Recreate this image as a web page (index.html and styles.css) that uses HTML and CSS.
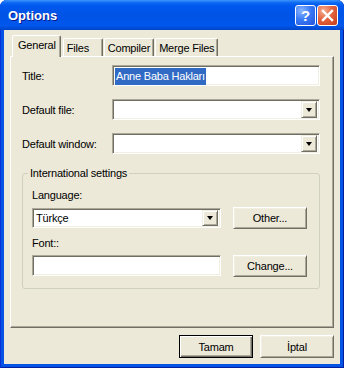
FILE: index.html
```html
<!DOCTYPE html>
<html lang="tr">
<head>
  <meta charset="UTF-8" />
  <title>Options</title>
  <link rel="stylesheet" href="styles.css">
</head>
<body>

<div class="window">

  <!-- Başlık çubuğu -->
  <div class="titlebar">
    <span class="title">Options</span>
    <div class="caption">
      <span class="cap help">?</span>
      <span class="cap close">
        <svg width="13" height="13" viewBox="0 0 13 13">
          <path d="M2 2 L11 11 M11 2 L2 11" stroke="#fff" stroke-width="2.4" stroke-linecap="square" />
        </svg>
      </span>
    </div>
  </div>

  <div class="client">

    <!-- Sekmeler -->
    <div class="tabs">
      <div class="tab active">General</div>
      <div class="tab">Files</div>
      <div class="tab">Compiler</div>
      <div class="tab">Merge Files</div>
    </div>

    <div class="panel">
      <div class="field">
        <label>Title:</label>
        <div class="edit"><span class="sel">Anne Baba Hakları</span></div>
      </div>
      <div class="field">
        <label>Default file:</label>
        <div class="combo"><span class="value"></span><span class="drop"></span></div>
      </div>
      <div class="field">
        <label>Default window:</label>
        <div class="combo"><span class="value"></span><span class="drop"></span></div>
      </div>

      <fieldset class="group">
        <legend>International settings</legend>
        <div class="glabel">Language:</div>
        <div class="grow">
          <div class="combo lang"><span class="value">Türkçe</span><span class="drop"></span></div>
          <button class="btn">Other...</button>
        </div>
        <div class="glabel">Font::</div>
        <div class="grow">
          <div class="edit font"></div>
          <button class="btn">Change...</button>
        </div>
      </fieldset>
    </div>

    <!-- Alt butonlar -->
    <div class="footer">
      <button class="btn default">Tamam</button>
      <button class="btn">İptal</button>
    </div>

  </div>
</div>

</body>
</html>
```

FILE: styles.css
```css
body {
  margin: 0;
  background: #fff;
  font-family: "Liberation Sans", Arial, sans-serif;
  font-size: 11px;
  letter-spacing: -0.2px;
  color: #000;
}
.window {
  width: 344px;
  height: 368px;
  display: flex;
  flex-direction: column;
  background: #0553E4;
  box-shadow: inset 1px 0 #0831D9, inset -1px 0 #001EA0, inset 0 -1px #001EA0;
  border-radius: 7px 7px 0 0;
  overflow: hidden;
}
.titlebar {
  height: 30px;
  flex: none;
  display: flex;
  align-items: center;
  padding: 0 6px 0 8px;
  background: linear-gradient(to bottom, #3D95FF 0, #0A66F1 3px, #0058EE 6px, #0053E6 50%, #0057EC 85%, #0045C8 100%);
}
.title {
  flex: 1;
  color: #fff;
  font-weight: bold;
  font-size: 13px;
  letter-spacing: 0;
  text-shadow: 1px 1px #0A1B8C;
}
.caption {
  display: flex;
  gap: 1px;
  margin-top: 1px;
}
.cap {
  width: 21px;
  height: 21px;
  box-sizing: border-box;
  border: 1px solid #fff;
  border-radius: 3px;
  display: flex;
  align-items: center;
  justify-content: center;
  color: #fff;
}
.cap.help {
  background: radial-gradient(circle at 30% 25%, #8DB6FF 0, #3A7BF5 45%, #1F52DA 100%);
  font-weight: bold;
  font-size: 15px;
}
.cap.close {
  background: radial-gradient(circle at 30% 25%, #F6AE92 0, #E4643F 45%, #C63C17 100%);
}
.client {
  flex: 1;
  margin: 0 4px 4px;
  background: #ECE9D8;
  display: flex;
  flex-direction: column;
  padding: 5px 6px 6px;
}
.tabs {
  height: 21px;
  display: flex;
  align-items: flex-end;
  gap: 1px;
  padding-left: 2px;
}
.tab {
  height: 18px;
  min-width: 40px;
  box-sizing: border-box;
  padding: 0 3px;
  border: 1px solid;
  border-color: #fff #716F64 transparent #fff;
  border-bottom: none;
  border-radius: 2px 2px 0 0;
  box-shadow: inset -1px 0 #ACA899;
  display: flex;
  align-items: center;
}
.tab.active {
  height: 22px;
  padding: 3px 4px 0 5px;
  margin-bottom: -1px;
  margin-right: 1px;
  background: #ECE9D8;
  position: relative;
  z-index: 1;
  align-items: flex-start;
}
.panel {
  flex: 1;
  border: 1px solid;
  border-color: #fff #716F64 #716F64 #fff;
  box-shadow: inset -1px -1px #ACA899;
  padding: 8px 13px 0 11px;
}
.field {
  display: flex;
  align-items: center;
  height: 21px;
  margin-bottom: 13px;
}
.field label {
  width: 90px;
  flex: none;
}
.edit, .combo {
  flex: 1;
  height: 21px;
  box-sizing: border-box;
  background: #fff;
  border: 1px solid;
  border-color: #ACA899 #fff #fff #ACA899;
  box-shadow: inset 1px 1px #716F64, inset -1px -1px #F1EFE2;
  padding: 2px;
}
.combo {
  display: flex;
  justify-content: space-between;
  align-items: center;
}
.combo .value {
  padding-left: 1px;
}
.drop {
  width: 16px;
  height: 17px;
  box-sizing: border-box;
  background: #ECE9D8;
  border: 1px solid;
  border-color: #F1EFE2 #716F64 #716F64 #F1EFE2;
  box-shadow: inset 1px 1px #fff, inset -1px -1px #ACA899;
  display: flex;
  align-items: center;
  justify-content: center;
}
.drop::after {
  content: "";
  border-left: 3.5px solid transparent;
  border-right: 3.5px solid transparent;
  border-top: 4px solid #000;
  margin-top: 1px;
}
.sel {
  display: inline-block;
  line-height: 17px;
  padding: 0 1px;
  background: #316AC5;
  color: #fff;
}
.group {
  margin: 0;
  padding: 0 13px 11px 9px;
  border: 1px solid #D0D0BF;
  border-radius: 3px;
  min-width: 0;
}
.group legend {
  padding: 0 2px;
  margin-left: -4px;
  line-height: 13px;
}
.glabel {
  line-height: 13px;
  margin-top: 9px;
}
.grow {
  display: flex;
  align-items: center;
  gap: 12px;
  height: 23px;
  margin-top: 4px;
}
.grow + .glabel {
  margin-top: 8px;
}
.grow .edit, .grow .combo {
  flex: none;
  width: 189px;
}
.grow .combo {
  height: 20px;
}
.grow .combo .drop {
  height: 16px;
}
.btn {
  width: 74px;
  height: 22px;
  flex: none;
  margin: 0;
  padding: 0;
  font-family: "Liberation Sans", Arial, sans-serif;
  font-size: 11px;
  letter-spacing: -0.2px;
  color: #000;
  background: #ECE9D8;
  border: 1px solid;
  border-color: #fff #716F64 #716F64 #fff;
  box-shadow: inset 1px 1px #F1EFE2, inset -1px -1px #ACA899;
}
.footer {
  display: flex;
  justify-content: flex-end;
  gap: 7px;
  padding-top: 7px;
}
.footer .btn {
  height: 23px;
}
.btn.default {
  border-color: #000;
  box-shadow: inset 1px 1px #fff, inset -1px -1px #716F64, inset -2px -2px #ACA899;
}
```
